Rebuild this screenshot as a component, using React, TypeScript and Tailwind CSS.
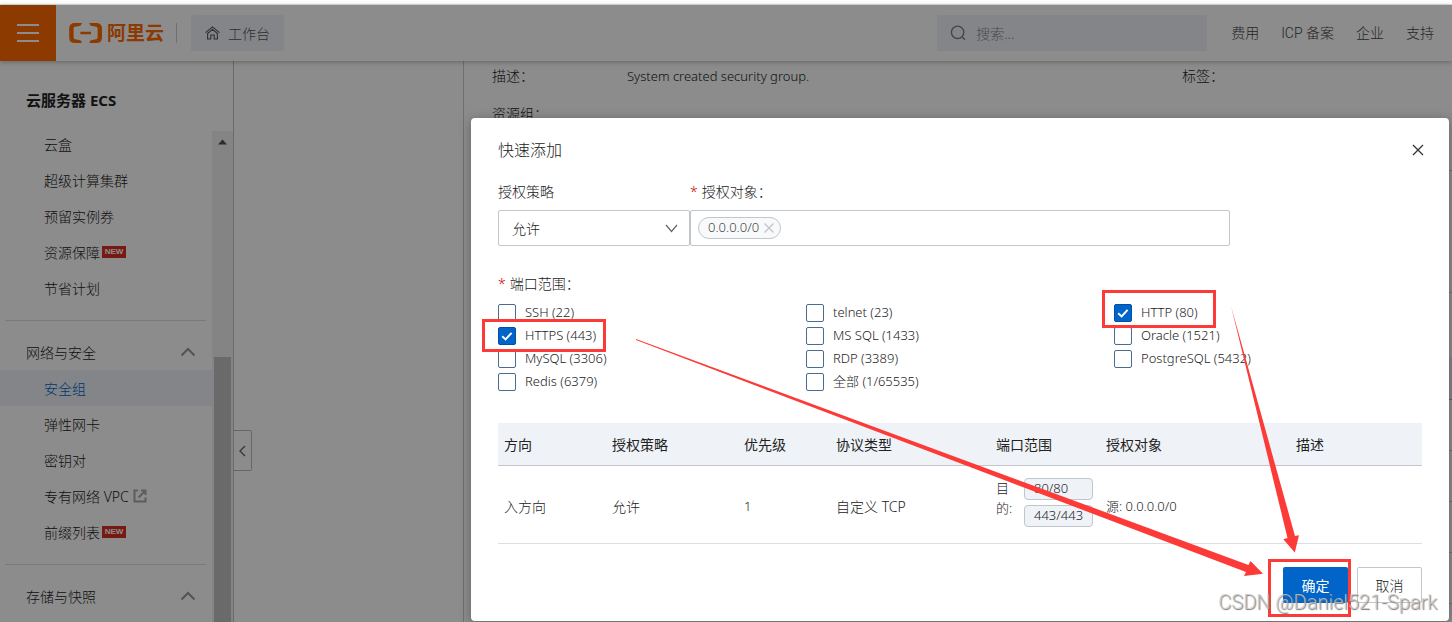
import React from "react";

const navLinks = ["费用", "ICP 备案", "企业", "支持"];

type Item = { label: string; badge?: boolean; external?: boolean; active?: boolean };

const computeItems: Item[] = [
  { label: "云盒" },
  { label: "超级计算集群" },
  { label: "预留实例券" },
  { label: "资源保障", badge: true },
  { label: "节省计划" },
];

const networkItems: Item[] = [
  { label: "安全组", active: true },
  { label: "弹性网卡" },
  { label: "密钥对" },
  { label: "专有网络 VPC", external: true },
  { label: "前缀列表", badge: true },
];

const ports = [
  { label: "SSH (22)" },
  { label: "telnet (23)" },
  { label: "HTTP (80)", checked: true },
  { label: "HTTPS (443)", checked: true },
  { label: "MS SQL (1433)" },
  { label: "Oracle (1521)" },
  { label: "MySQL (3306)" },
  { label: "RDP (3389)" },
  { label: "PostgreSQL (5432)" },
  { label: "Redis (6379)" },
  { label: "全部 (1/65535)" },
];

function Logo() {
  return (
    <a href="#" aria-label="阿里云" className="ml-[13px] flex items-center text-[#ff6a00]">
      <svg width="34" height="22" viewBox="0 0 34 22" fill="none" aria-hidden="true">
        <path
          d="M13 1 L11.5 3.8 L6 4.8 Q4.6 5.1 4.6 6.6 V15.4 Q4.6 16.9 6 17.2 L11.5 18.2 L13 21 H6 Q0.2 21 0.2 15.4 V6.6 Q0.2 1 6 1 Z M20.2 1 L21.7 3.8 L27.2 4.8 Q28.6 5.1 28.6 6.6 V15.4 Q28.6 16.9 27.2 17.2 L21.7 18.2 L20.2 21 H27.2 Q33 21 33 15.4 V6.6 Q33 1 27.2 1 Z M11.4 9.8 H22 V12.2 H11.4 Z"
          fill="currentColor"
        />
      </svg>
      <span className="ml-1 text-[19px] leading-6 font-bold">阿里云</span>
    </a>
  );
}

function MenuItem({ item }: { item: Item }) {
  return (
    <li>
      <a
        href="#"
        className={
          item.active
            ? "flex h-9 items-center bg-[#eff3f8] pl-11 text-[#0064c8]"
            : "flex h-9 items-center pl-11"
        }
      >
        {item.label}
        {item.badge && (
          <span className="ml-[2px] flex h-3 w-6 items-center justify-center bg-[#d93026] font-['Liberation_Sans',sans-serif] text-[8px] leading-3 font-bold text-white">
            NEW
          </span>
        )}
        {item.external && (
          <svg className="ml-1" width="14" height="14" viewBox="0 0 14 14" fill="none" stroke="#aaa" strokeWidth="2" aria-hidden="true">
            <path d="M5 1.5 H1.5 V12.5 H12.5 V8.5 M5.5 8.5 L12 2 M8 1.5 H12.5 V6" />
          </svg>
        )}
      </a>
    </li>
  );
}

function GroupTitle({ children }: { children: React.ReactNode }) {
  return (
    <button type="button" className="flex h-9 w-full items-center justify-between pr-4 pl-[26px]">
      {children}
      <svg width="16" height="10" viewBox="0 0 16 10" fill="none" stroke="#999" strokeWidth="2" aria-hidden="true">
        <path d="M1.5 8.5 L8 2 L14.5 8.5" />
      </svg>
    </button>
  );
}

function Sidebar() {
  return (
    <aside className="flex w-[234px] shrink-0 flex-col border-r border-[#c2c2c2] bg-white">
      <h2 className="mt-7 mb-5 pl-[26px] text-[15px] leading-[22px] font-bold">云服务器 ECS</h2>
      <div className="flex min-h-0 flex-1">
        <nav className="min-w-0 flex-1 overflow-hidden">
          <ul className="-mt-[5px]">
            {computeItems.map((i) => (
              <MenuItem key={i.label} item={i} />
            ))}
          </ul>
          <hr className="mr-[6px] ml-[5px] mt-[14px] mb-[13px] border-[#dedede]" />
          <GroupTitle>网络与安全</GroupTitle>
          <ul>
            {networkItems.map((i) => (
              <MenuItem key={i.label} item={i} />
            ))}
          </ul>
          <hr className="mr-[6px] ml-[5px] mt-[14px] mb-[13px] border-[#dedede]" />
          <GroupTitle>存储与快照</GroupTitle>
        </nav>
        <div className="flex w-[21px] shrink-0 flex-col items-center bg-[#f1f1f1] pt-2">
          <svg width="9" height="6" viewBox="0 0 9 6" aria-hidden="true">
            <path d="M4.5 0.5 L9 5.5 H0 Z" fill="#505050" />
          </svg>
          <div className="mt-[212px] w-[17px] flex-1 bg-[#c1c1c1]" />
        </div>
      </div>
    </aside>
  );
}

function Header() {
  return (
    <header className="relative flex h-14 shrink-0 items-center bg-white shadow-[0_1px_5px_rgba(0,0,0,0.3)]">
      <button type="button" aria-label="菜单" className="flex h-14 w-14 flex-col items-center justify-center gap-[6px] bg-[#ff6a00]">
        <span className="h-[2px] w-[22px] bg-white" />
        <span className="h-[2px] w-[22px] bg-white" />
        <span className="h-[2px] w-[22px] bg-white" />
      </button>
      <Logo />
      <span className="ml-3 h-5 w-px bg-[#ccc]" />
      <a href="#" className="ml-[14px] flex h-9 items-center gap-2 rounded-xs bg-[#eff3f8] px-[14px] text-[#555]">
        <svg width="15" height="14" viewBox="0 0 15 14" fill="none" stroke="#555" strokeWidth="1.1" aria-hidden="true">
          <path d="M0.6 6.6 L7.5 0.9 L14.4 6.6 M2.6 7.6 V13 H5.8 V9 H9.2 V13 H12.4 V7.6 M2 8 L7.5 3.4 L13 8" />
        </svg>
        工作台
      </a>
      <label className="mr-6 ml-auto flex h-9 w-[270px] items-center gap-[10px] bg-[#eff3f8] px-[13px]">
        <svg width="16" height="16" viewBox="0 0 16 16" fill="none" stroke="#808080" strokeWidth="1.4" aria-hidden="true">
          <circle cx="7.6" cy="7.3" r="6.2" />
          <path d="M12.1 11.8 L14.9 14.8" />
        </svg>
        <input aria-label="搜索" placeholder="搜索..." className="min-w-0 flex-1 bg-transparent outline-none placeholder:text-[#888]" />
      </label>
      <nav className="flex gap-[22px] pr-[18px] font-[Roboto,'Noto_Sans_CJK_SC',sans-serif] text-[#444]">
        {navLinks.map((l) => (
          <a key={l} href="#">
            {l}
          </a>
        ))}
      </nav>
    </header>
  );
}

function Dialog() {
  return (
    <section role="dialog" aria-label="快速添加" className="relative rounded bg-white px-[27px] pb-[18px] text-[#222] shadow-[0_2px_12px_rgba(0,0,0,0.3)]">
      <div className="flex items-center justify-between pt-5">
        <h1 className="text-[16px] leading-6">快速添加</h1>
        <button type="button" aria-label="关闭" className="mr-[-2px]">
          <svg width="12" height="12" viewBox="0 0 12 12" fill="none" stroke="#333" strokeWidth="1.3" aria-hidden="true">
            <path d="M1 1 L11 11 M11 1 L1 11" />
          </svg>
        </button>
      </div>

      <div className="mt-5 flex w-[732px]">
        <div className="w-48">
          <label htmlFor="policy" className="block h-5 leading-5">
            授权策略
          </label>
          <div className="relative mt-2">
            <select id="policy" className="h-9 w-full appearance-none rounded-xs border border-[#c0c6cc] bg-white pl-[13px]">
              <option>允许</option>
            </select>
            <svg className="pointer-events-none absolute top-[14px] right-3" width="13" height="9" viewBox="0 0 13 9" fill="none" stroke="#666" strokeWidth="1.2" aria-hidden="true">
              <path d="M1 1 L6.5 7.5 L12 1" />
            </svg>
          </div>
        </div>
        <div className="flex-1">
          <label htmlFor="target" className="block h-5 leading-5">
            <span className="mr-1 text-[#c00]">*</span>授权对象：
          </label>
          <div className="mt-2 flex h-9 items-center rounded-xs border border-[#c0c6cc] px-[7px]">
            <span className="flex h-[22px] items-center gap-[5px] rounded-full border border-[#c0c6cc] bg-[#f7f9fa] pr-[6px] pl-[9px] text-[13px] text-[#444]">
              0.0.0.0/0
              <button type="button" aria-label="移除">
                <svg width="10" height="10" viewBox="0 0 10 10" fill="none" stroke="#c0c6cc" strokeWidth="1.3" aria-hidden="true">
                  <path d="M0.5 0.5 L9.5 9.5 M9.5 0.5 L0.5 9.5" />
                </svg>
              </button>
            </span>
            <input id="target" className="min-w-0 flex-1 outline-none" />
          </div>
        </div>
      </div>

      <fieldset className="mt-7">
        <legend className="h-5 leading-5">
          <span className="mr-1 text-[#c00]">*</span>端口范围：
        </legend>
        <div className="mt-[7px] grid grid-cols-3">
          {ports.map((p) => (
            <label key={p.label} className="flex h-[23px] items-center gap-[9px] text-[13px]">
              <span className="grid">
                <input
                  type="checkbox"
                  defaultChecked={p.checked}
                  className="peer col-start-1 row-start-1 h-[18px] w-[18px] appearance-none rounded-xs border border-[#4a6c91] bg-white checked:border-[#0050a8] checked:bg-[#0064c8]"
                />
                <svg className="pointer-events-none invisible col-start-1 row-start-1 peer-checked:visible" width="18" height="18" viewBox="0 0 18 18" fill="none" stroke="#fff" strokeWidth="2" aria-hidden="true">
                  <path d="M4.2 9.2 L7.6 12.4 L13.6 5.8" />
                </svg>
              </span>
              {p.label}
            </label>
          ))}
        </div>
      </fieldset>

      <table className="mt-[30px] w-full table-fixed border-separate border-spacing-0 text-left">
        <colgroup>
          <col className="w-[108px]" />
          <col className="w-[132px]" />
          <col className="w-[92px]" />
          <col className="w-[160px]" />
          <col className="w-[110px]" />
          <col className="w-[190px]" />
          <col />
        </colgroup>
        <thead>
          <tr className="h-[43px] bg-[#eff3f8]">
            {["方向", "授权策略", "优先级", "协议类型", "端口范围", "授权对象", "描述"].map((h) => (
              <th key={h} className="border-b border-[#c0c6cc] pl-[6px] font-normal">
                {h}
              </th>
            ))}
          </tr>
        </thead>
        <tbody>
          <tr className="h-[78px]">
            <td className="border-b border-[#dedede] pt-1 pl-[6px]">入方向</td>
            <td className="border-b border-[#dedede] pt-1 pl-[6px]">允许</td>
            <td className="border-b border-[#dedede] pt-1 pl-[6px] text-[13px]">1</td>
            <td className="border-b border-[#dedede] pt-1 pl-[6px]">自定义 TCP</td>
            <td className="border-b border-[#dedede] pb-1 pl-[6px]">
              <div className="flex items-start gap-2">
                <span className="w-5 text-[13px] leading-5">目的:</span>
                <span className="flex flex-col gap-[5px] text-[13px]">
                  <span className="flex h-[22px] w-[69px] items-center rounded border border-[#c0c6cc] bg-[#eff3f8] pl-[9px]">80/80</span>
                  <span className="flex h-[22px] w-[69px] items-center rounded border border-[#c0c6cc] bg-[#eff3f8] pl-[9px]">443/443</span>
                </span>
              </div>
            </td>
            <td className="border-b border-[#dedede] pt-1 pl-[6px] text-[13px]">源: 0.0.0.0/0</td>
            <td className="border-b border-[#dedede]" />
          </tr>
        </tbody>
      </table>

      <div className="mt-[23px] flex justify-end gap-[9px]">
        <button type="button" className="h-9 w-[65px] rounded-xs bg-[#0064c8] font-normal text-white">
          确定
        </button>
        <button type="button" className="h-9 w-[65px] rounded-xs border border-[#c0c6cc] bg-white">
          取消
        </button>
      </div>
      <Annotations />
    </section>
  );
}

/* Red marker drawing laid over the dialog. */
function Annotations() {
  return (
    <>
      <svg className="pointer-events-none absolute top-0 left-0" width="978" height="503" viewBox="471 118 978 503" aria-hidden="true">
        <g fill="none" stroke="#fc3a38" strokeWidth="3">
          <rect x="483.5" y="320.5" width="121" height="30" />
          <rect x="1103.5" y="291.5" width="111" height="35" />
          <rect x="1269.5" y="560.5" width="80" height="55" />
        </g>
        <g fill="#fc3a38">
          <path d="M636 339 L1248.5 565 L1250.5 561 L1263 573.8 L1244 576 L1246 572 L636 340 Z" />
          <path d="M1231 306 L1295 536 L1299 535.3 L1294.8 552.5 L1283.3 539.3 L1287.5 538 Z" />
        </g>
      </svg>
      <span className="pointer-events-none absolute right-3 bottom-[5px] font-[Roboto,sans-serif] text-[20px] leading-7 font-light text-[#c8c8c8]/80 [text-shadow:1px_1px_1px_#777]">
        CSDN @Daniel521-Spark
      </span>
    </>
  );
}

export default function App() {
  return (
    <div className="flex h-screen flex-col overflow-hidden bg-white pt-1 font-['Noto_Sans','Noto_Sans_CJK_SC',sans-serif] text-[14px] font-light text-[#222]">
      <div className="relative flex min-h-0 flex-1 flex-col border-t border-[#ddd]">
        <Header />
        <div className="flex min-h-0 flex-1">
          <Sidebar />
          <button type="button" aria-label="收起" className="mt-[369px] flex h-[41px] w-[18px] shrink-0 items-center justify-center self-start rounded-r-xs border border-l-0 border-[#bbb]">
            <svg width="7" height="12" viewBox="0 0 7 12" fill="none" stroke="#666" strokeWidth="1.4" aria-hidden="true">
              <path d="M6 1 L1 6 L6 11" />
            </svg>
          </button>
          <main className="ml-[211px] flex-1 border-l border-[#ccc] pt-[5px] pl-7">
            <dl className="grid grid-cols-[135px_1fr_270px] gap-y-[18px] leading-5">
              <dt>描述：</dt>
              <dd className="text-[13px]">System created security group.</dd>
              <dt>标签：</dt>
              <dt>资源组：</dt>
            </dl>
            <div className="mt-[46px] h-[123px] border-y border-[#d0d0d0]" />
            <div className="mt-16 h-[43px] border-b border-[#b0b0b0] bg-[#eff3f8]" />
            <div className="h-[51px] border-b border-[#d0d0d0]" />
            <div className="h-[51px] border-b border-[#d0d0d0]" />
            <div className="h-[51px] border-b border-[#d0d0d0]" />
            <div className="h-[51px] border-b border-[#d0d0d0]" />
          </main>
        </div>
        <div className="absolute inset-0 bg-black/45 pt-[113px] pr-[3px] pl-[471px]">
          <Dialog />
        </div>
      </div>
    </div>
  );
}
